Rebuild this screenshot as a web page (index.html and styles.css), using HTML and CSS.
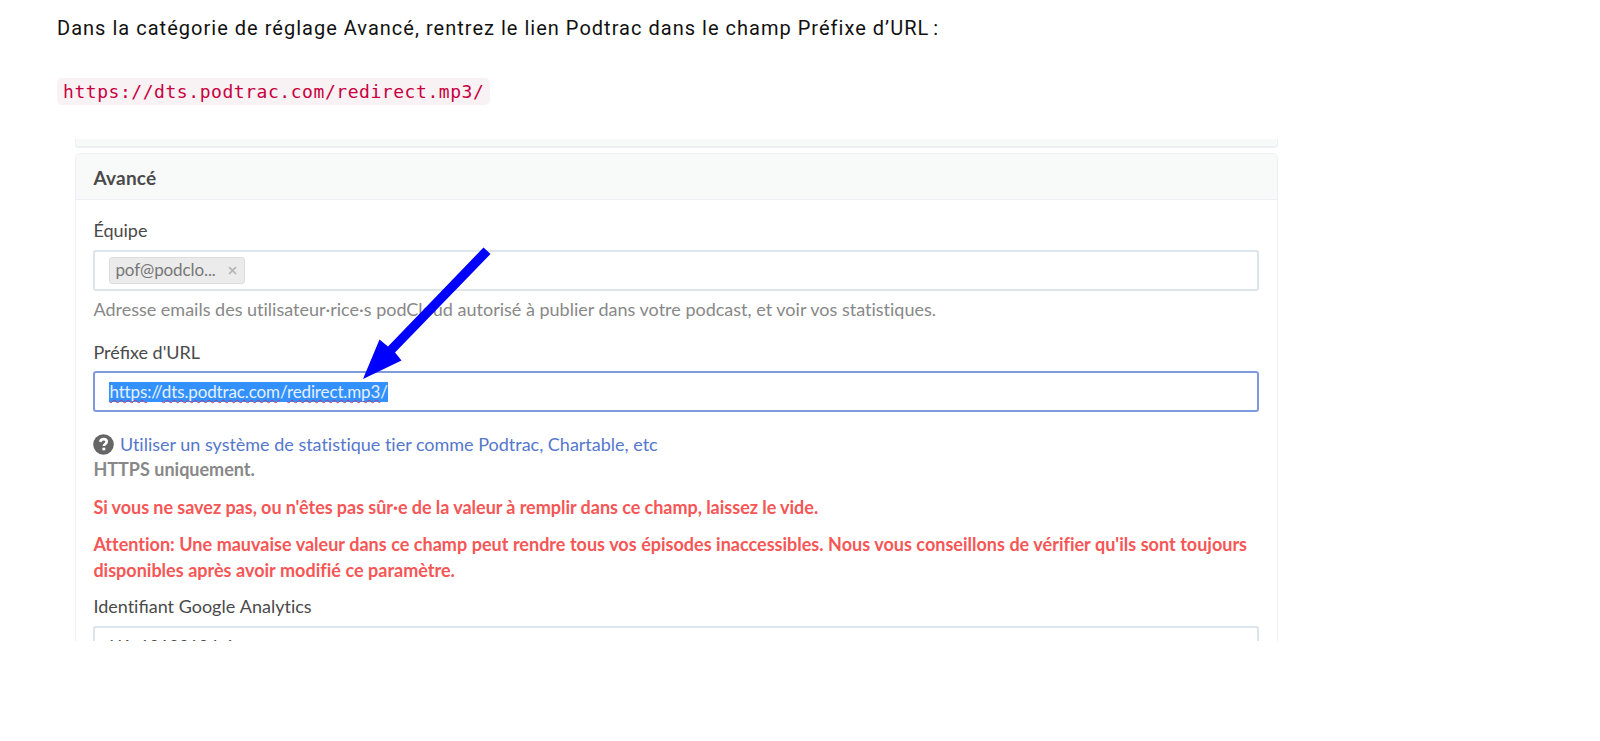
FILE: index.html
```html
<!DOCTYPE html>
<html lang="fr">
<head>
  <meta charset="utf-8">
  <meta name="viewport" content="width=device-width, initial-scale=1.0">
  <title>Podtrac</title>
  <link rel="stylesheet" href="styles.css">
</head>
<body>

  <p class="intro">Dans la catégorie de réglage Avancé, rentrez le lien Podtrac dans le champ Préfixe d’URL<span class="colon"> :</span></p>
  <p class="code-line"><code>https://dts.podtrac.com/redirect.mp3/</code></p>

  <div class="capture">
    <div class="panel-prev"></div>
    <div class="panel">
      <h3 class="panel-title">Avancé</h3>
      <div class="panel-body">
        <label class="label">Équipe</label>
        <div class="field">
          <span class="tag"><span class="tag-name">pof@podclo...</span>
            <svg class="tag-close" viewBox="0 0 10 10"><path d="M1.2 1.2l7.6 7.6M8.8 1.2L1.2 8.8"/></svg>
          </span>
        </div>
        <p class="help team-help">Adresse emails des utilisateur·rice·s podCloud autorisé à publier dans votre podcast, et voir vos statistiques.</p>

        <label class="label">Préfixe d'URL</label>
        <div class="field focus"><span class="selected"><u>https</u>://<u>dts.podtrac.com</u>/<u>redirect.mp3</u>/</span></div>
        <p class="help link-line">
          <svg class="question" viewBox="0 0 21 21">
            <circle cx="10.5" cy="10.5" r="10.3" fill="#666"/>
            <path d="M7.2 7.9C7.7 5.9 9 5.2 10.6 5.2c1.8 0 3.1 1 3.1 2.6 0 2.2-2.8 2.2-2.8 4.3" fill="none" stroke="#fff" stroke-width="2.7"/>
            <path d="M9.4 13.7h2.9v2.6H9.4z" fill="#fff"/>
          </svg>
          <a class="link">Utiliser un système de statistique tier comme Podtrac, Chartable, etc</a>
        </p>
        <p class="help"><b>HTTPS uniquement.</b></p>
        <p class="warning advice">Si vous ne savez pas, ou n'êtes pas sûr·e de la valeur à remplir dans ce champ, laissez le vide.</p>
        <p class="warning"><span class="plain">Attention:</span> Une mauvaise valeur dans ce champ peut rendre tous vos épisodes inaccessibles. Nous vous conseillons de vérifier qu'ils sont toujours<br>disponibles après avoir modifié ce paramètre.</p>

        <label class="label analytics"><span class="plain">Identi</span>fiant Google <span class="plain">Analytics</span></label>
        <div class="field"><span class="value">UA-12122124-1</span></div>
      </div>
    </div>

    <svg class="arrow" viewBox="0 0 130 134">
      <path d="M120.5 0.5L127.5 7L32 105.5L38.5 113.5L0 132L16.5 92.5L25 99.5Z" fill="#00f"/>
    </svg>
  </div>

</body>
</html>
```

FILE: styles.css
```css
* {
  box-sizing: border-box;
}
body {
  margin: 0;
  padding: 13px 57px 0;
  background: #fff;
}
p, h3 {
  margin: 0;
}
.intro {
  font: 20px/30px Roboto, sans-serif;
  letter-spacing: 1.02px;
  color: #111;
  white-space: nowrap;
}
.colon {
  word-spacing: -2px;
}
.code-line {
  height: 27px;
  margin: 35px 0 34px;
  display: flex;
}
code {
  padding: 0 6px;
  border-radius: 5px;
  background: #f9f2f4;
  color: #c7003f;
  font: 18px/27px "DejaVu Sans Mono", monospace;
  letter-spacing: 0.55px;
}
.capture {
  position: relative;
  width: 1203px;
  height: 502px;
  margin-left: 18px;
  overflow: hidden;
  font: 18px/25.4px Lato, sans-serif;
  color: #4a4a4a;
}
.panel-prev {
  height: 9px;
  margin-bottom: 5px;
  background: #f8faf9;
  border: 1px solid #edf0f3;
  border-top: 0;
  border-bottom-width: 2px;
  border-radius: 0 0 4px 4px;
}
.panel {
  height: 600px;
  border: 1px solid #eef1f4;
  border-radius: 5px;
}
.panel-title {
  height: 46px;
  padding: 0 17.5px;
  background: #f8faf9;
  border-bottom: 1px solid #edf0f3;
  border-radius: 5px 5px 0 0;
  font-size: 19px;
  letter-spacing: 0.2px;
  line-height: 48px;
}
.panel-body {
  padding: 18px 18px 0 17.4px;
}
.label {
  display: block;
  height: 31.6px;
}
.field {
  display: flex;
  align-items: center;
  height: 41px;
  padding: 0 14px;
  border: 2px solid #dde4ea;
  border-radius: 3px;
}
.field.focus {
  border-color: #7f9adb;
}
.tag {
  display: flex;
  align-items: center;
  justify-content: space-between;
  width: 136px;
  height: 27px;
  padding: 0 7px 0 5px;
  background: #ebebeb;
  border: 1px solid #ddd;
  border-radius: 3px;
  color: #777;
  font-size: 17px;
  letter-spacing: -0.1px;
}
.tag-close {
  width: 9px;
  height: 9px;
  fill: none;
  stroke: #b5b5b5;
  stroke-width: 1.8;
}
.help {
  color: #888;
}
.team-help {
  margin: 6px 0 17.5px;
  font-variant-ligatures: none;
}
.selected {
  background: #3390ff;
  color: #e4f0ff;
  font-size: 17px;
  letter-spacing: -0.13px;
  line-height: 20px;
}
.selected u {
  text-decoration: underline wavy #b83a72 1px;
  text-underline-offset: 1px;
  text-decoration-skip-ink: none;
}
.value {
  font-size: 17px;
}
.link-line {
  display: flex;
  align-items: center;
  margin-top: 19.5px;
}
.question {
  width: 21px;
  height: 21px;
  margin-right: 5.5px;
}
.link {
  color: #5577cc;
  font-variant-ligatures: none;
  letter-spacing: -0.01px;
}
.plain {
  font-variant-ligatures: none;
}
.warning {
  margin-top: 12px;
  color: #f65656;
  font-weight: bold;
  letter-spacing: 0.001px;
  word-spacing: 0.18px;
  white-space: nowrap;
}
.warning.advice {
  margin-top: 12.4px;
  word-spacing: -0.2px;
}
.analytics {
  margin-top: 11.2px;
}
/* sits over the form and points at the prefix field */
.arrow {
  position: absolute;
  left: 288px;
  top: 108px;
  width: 130px;
  height: 134px;
}
```
